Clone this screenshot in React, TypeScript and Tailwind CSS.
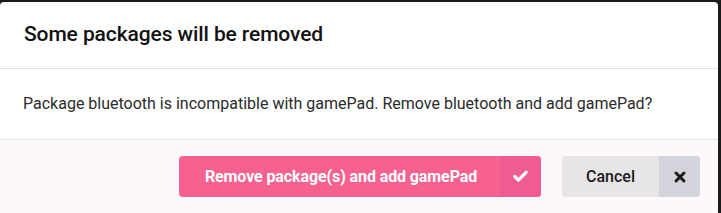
import { Check, X } from "lucide-react";

export default function App() {
  return (
    <div className="w-[721px] h-[213px] bg-[#1c1a1c] pt-[2px] pr-[3px] overflow-hidden font-['Roboto',sans-serif]">
      <div className="bg-white rounded-[4px] h-[213px] flex flex-col overflow-hidden">
        {/* Header */}
        <div className="h-[67px] flex items-center pl-[24px] border-b border-[#e3e3e3]">
          <h2 className="text-[21px] font-medium text-[#111111] tracking-[-0.1px]">Some packages will be removed</h2>
        </div>

        {/* Body */}
        <div className="h-[71px] flex items-center pl-[23px] border-b border-[#e3e3e3]">
          <p className="text-[16px] text-[#2b2b2b]">
            Package bluetooth is incompatible with gamePad. Remove bluetooth and add gamePad?
          </p>
        </div>

        {/* Footer */}
        <div className="flex-1 bg-[#fdf8fc] flex justify-end items-start pt-[16px] pr-[18px] gap-[21px]">
          <button className="h-[41px] w-[362px] flex rounded-[4px] overflow-hidden bg-[#f66190] text-white">
            <span className="flex-1 flex items-center justify-center text-[16px] font-bold pl-[3px] tracking-[-0.1px]">
              Remove package(s) and add gamePad
            </span>
            <span className="w-[41px] flex items-center justify-center bg-[#ee5c92]">
              <Check className="w-[17px] h-[17px]" strokeWidth={4.5} />
            </span>
          </button>
          <button className="h-[41px] w-[138px] flex rounded-[4px] overflow-hidden bg-[#e8e5e8] text-[#1a1a1a]">
            <span className="flex-1 flex items-center justify-center text-[16px] font-medium">Cancel</span>
            <span className="w-[41px] flex items-center justify-center bg-[#d4d4dc]">
              <X className="w-[16px] h-[16px]" strokeWidth={4.5} />
            </span>
          </button>
        </div>
      </div>
    </div>
  );
}
